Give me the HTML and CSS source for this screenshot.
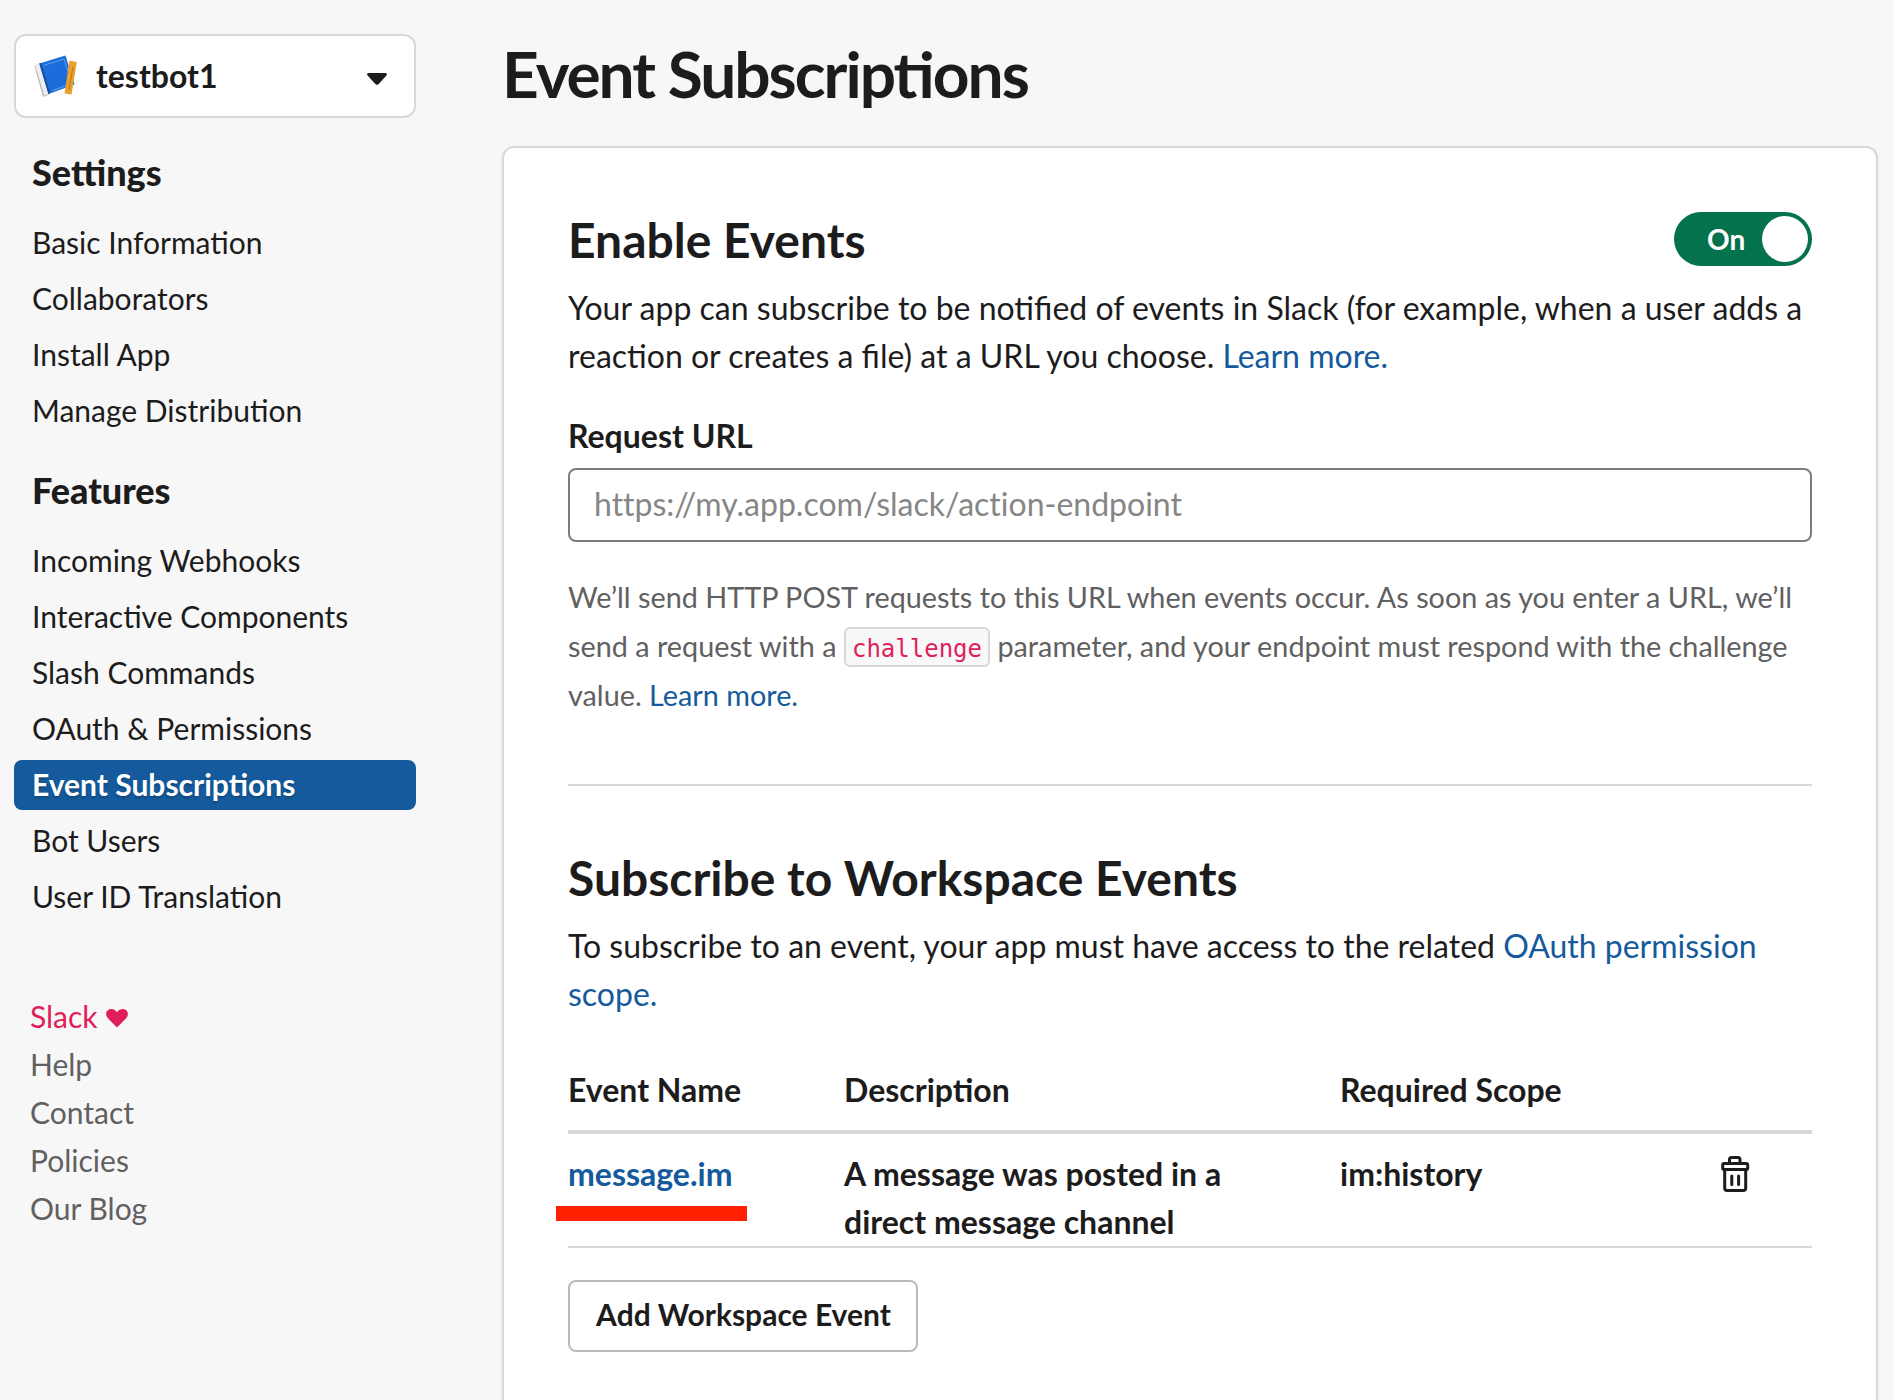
FILE: index.html
```html
<!DOCTYPE html>
<html lang="en">
<head>
<meta charset="utf-8">
<title>Event Subscriptions</title>
<link rel="stylesheet" href="styles.css">
</head>
<body>
<div class="layout">
  <aside class="sidebar">
    <div class="app-select">
      <svg class="app-icon" width="46" height="46" viewBox="0 0 46 46">
        <path d="M.3 12.500 L9 44 L15 41.500 L5 10.500z" fill="#bdbdbd"/>
        <path d="M.8 11.500 L5.500 10 L14.500 40.500 L10.500 42.500z" fill="#ededed"/>
        <path d="M5.300 10.500 L31.500 2.500 L40.500 31.500 L14.500 41z" fill="#1d6cdb"/>
        <path d="M5.300 10.500 L7 9.900 L16.300 40.300 L14.500 41z" fill="#174fa0"/>
        <path d="M9.500 12.500 L30 6 L38 30.500 L18.500 37.500" fill="none" stroke="#7fb2f2" stroke-width=".7"/>
        <path d="M35.300 7.800 L42.800 9 L37.500 41.500 L30.500 40.500z" fill="#e9a02c"/>
        <path d="M39 14 L35 37" stroke="#b87618" stroke-width="1"/>
      </svg>
      <span class="app-name">testbot1</span>
      <svg class="caret" width="20" height="12" viewBox="0 0 20 12"><path d="M1.600 0h16.800c1.400 0 2 1.500 1 2.500l-7.700 8.600c-.9 1.100-2.500 1.100-3.400 0L.6 2.500c-1-1-.4-2.500 1-2.500z" fill="#1d1c1d"/></svg>
    </div>
    <h3 class="nav-title">Settings</h3>
    <nav class="nav">
      <a>Basic Information</a>
      <a>Collaborators</a>
      <a>Install App</a>
      <a>Manage Distribution</a>
    </nav>
    <h3 class="nav-title">Features</h3>
    <nav class="nav">
      <a>Incoming Webhooks</a>
      <a>Interactive Components</a>
      <a>Slash Commands</a>
      <a>OAuth &amp; Permissions</a>
      <a class="active">Event Subscriptions</a>
      <a>Bot Users</a>
      <a>User ID Translation</a>
    </nav>
    <div class="footer-links">
      <a class="love">Slack <svg class="heart" width="22" height="19" viewBox="0 0 22 19"><path d="M11 18.500L1.800 9.200C-.5 6.500-.3 3 1.800 1.300 4.500-.9 8.500-.3 11 3.200 13.500-.3 17.500-.9 20.200 1.300c2.100 1.700 2.300 5.200 0 7.900z" fill="#e01e5a"/></svg></a>
      <a>Help</a>
      <a>Contact</a>
      <a>Policies</a>
      <a>Our Blog</a>
    </div>
  </aside>
  <main class="main">
    <h1>Event Subscriptions</h1>
    <section class="card">
      <div class="section-head">
        <h2>Enable Events</h2>
        <div class="toggle"><span>On</span><i class="knob"></i></div>
      </div>
      <p class="lead">Your app can subscribe to be notified of events in Slack (for example, when a user adds a reaction or creates a file) at a URL you choose. <a>Learn more.</a></p>
      <label class="field-label" for="url">Request URL</label>
      <input id="url" class="field" placeholder="https://my.app.com/slack/action-endpoint">
      <p class="hint">We’ll send HTTP POST requests to this URL when events occur. As soon as you enter a URL, we’ll send a request with a <code>challenge</code> parameter, and your endpoint must respond with the challenge value. <a>Learn more.</a></p>
      <hr>
      <h2>Subscribe to Workspace Events</h2>
      <p class="lead">To subscribe to an event, your app must have access to the related <a>OAuth permission scope.</a></p>
      <div class="row row-head"><span>Event Name</span><span>Description</span><span>Required Scope</span></div>
      <div class="row row-body">
        <span class="event"><a>message.im</a></span>
        <span>A message was posted in a direct message channel</span>
        <span>im:history</span>
        <svg class="trash" width="30" height="36" viewBox="0 0 30 36" fill="none" stroke="#1d1c1d" stroke-width="3" stroke-linejoin="round" stroke-linecap="round">
          <path d="M8.500 7V3.500a2 2 0 0 1 2-2h6.500a2 2 0 0 1 2 2V7"/>
          <rect x="1.700" y="7.500" width="25" height="6" rx="1.500"/>
          <path d="M3.700 14v18a2.500 2.500 0 0 0 2.500 2.500h16a2.500 2.500 0 0 0 2.500-2.500V14M10.800 20v8.500M17.600 20v8.500"/>
        </svg>
      </div>
      <button class="btn">Add Workspace Event</button>
    </section>
  </main>
</div>
</body>
</html>
```
FILE: styles.css
```css
* { box-sizing: border-box; }
html, body { height: 100%; }
body {
  margin: 0;
  overflow: hidden;
  background: #f7f7f7;
  color: #1d1c1d;
  font: 400 32px/48px Lato, "Liberation Sans", sans-serif;
}
a { color: #145a9c; text-decoration: none; }
h1, h2, h3, p { margin: 0; }

.layout { display: flex; gap: 86px; padding: 34px 16px 0 14px; height: 100vh; overflow: hidden; }

.sidebar { width: 402px; flex: none; }
.app-select {
  display: flex;
  align-items: center;
  height: 84px;
  padding: 0 27px 0 18px;
  border: 2px solid #d8d8d8;
  border-radius: 12px;
  background: #fff;
}
.app-icon { flex: none; }
.app-name { flex: 1; margin-left: 16px; font-weight: 700; }
.caret { margin-top: 5px; }
.nav-title { margin: 30px 0 22px; padding-left: 18px; font-size: 36px; line-height: 48px; font-weight: 900; }
.nav { display: flex; flex-direction: column; gap: 6px; }
.nav a {
  padding: 0 18px 2px;
  border-radius: 8px;
  color: #1d1c1d;
  font-size: 30px;
  line-height: 48px;
}
.nav a.active { background: #145a9c; color: #fff; font-weight: 700; text-shadow: 0 2px 2px rgba(0, 0, 0, .2); }
.footer-links { display: flex; flex-direction: column; margin-top: 70px; padding-left: 16px; font-size: 30px; }
.footer-links a { color: #616061; }
.footer-links .love { color: #e01e5a; }
.heart { margin-left: 1px; }

.main { flex: 1; display: flex; flex-direction: column; }
h1 {
  padding-top: 1px;
  font-size: 64px;
  line-height: 78px;
  font-weight: 700;
  letter-spacing: -2px;
  font-feature-settings: "liga" 1;
}
.card {
  flex: 1;
  margin-top: 33px;
  padding: 64px 64px 0;
  border: 2px solid #d8d8d8;
  border-bottom: 0;
  border-radius: 12px 12px 0 0;
  background: #fff;
  box-shadow: 0 2px 4px rgba(0, 0, 0, .06);
}
.section-head { display: flex; justify-content: space-between; align-items: flex-start; }
h2 { font-size: 48px; line-height: 56px; font-weight: 700; }
.toggle {
  display: flex;
  align-items: center;
  justify-content: space-between;
  width: 138px;
  height: 54px;
  padding: 0 4px 0 33px;
  border-radius: 27px;
  background: #04724d;
  color: #fff;
  font-size: 28px;
  font-weight: 700;
}
.knob { width: 46px; height: 46px; border-radius: 50%; background: #fff; }
.lead { margin-top: 16px; }
.field-label { display: block; margin-top: 32px; font-weight: 700; }
.field {
  display: block;
  width: 100%;
  height: 74px;
  margin-top: 8px;
  padding: 0 24px 3px;
  border: 2px solid #7d7d7d;
  border-radius: 8px;
  background: #fff;
  font: inherit;
  font-variant-ligatures: none;
}
.field::placeholder { color: #868686; opacity: 1; }
.hint { margin-top: 31px; color: #616061; font-size: 28.8px; line-height: 48.96px; }
code {
  padding: 6px 6px 2px;
  border: 2px solid #d8d8d8;
  border-radius: 6px;
  background: #f8f8f8;
  color: #e01e5a;
  font: 24px/32px "DejaVu Sans Mono", monospace;
}
hr { height: 2px; margin: 64px 0; border: 0; background: #d8d8d8; }
.row { display: grid; grid-template-columns: 276px 496px 380px auto; font-weight: 700; }
.row-head { margin-top: 48px; padding-bottom: 16px; border-bottom: 4px solid #d8d8d8; }
.row-body { padding-top: 16px; border-bottom: 2px solid #d8d8d8; }
.row-body span:nth-child(2) { padding-right: 100px; }
.event { position: relative; }
.event::after {
  content: "";
  position: absolute;
  left: -12px;
  top: 56px;
  width: 191px;
  height: 15px;
  background: #ff2101;
}
.trash { margin: 6px 0 0 1px; }
.btn {
  display: block;
  width: 350px;
  height: 72px;
  margin-top: 32px;
  padding: 0 0 3px 1px;
  border: 2px solid #bababa;
  border-radius: 8px;
  background: #fff;
  color: #1d1c1d;
  font: 700 30px/48px Lato, sans-serif;
}
```
